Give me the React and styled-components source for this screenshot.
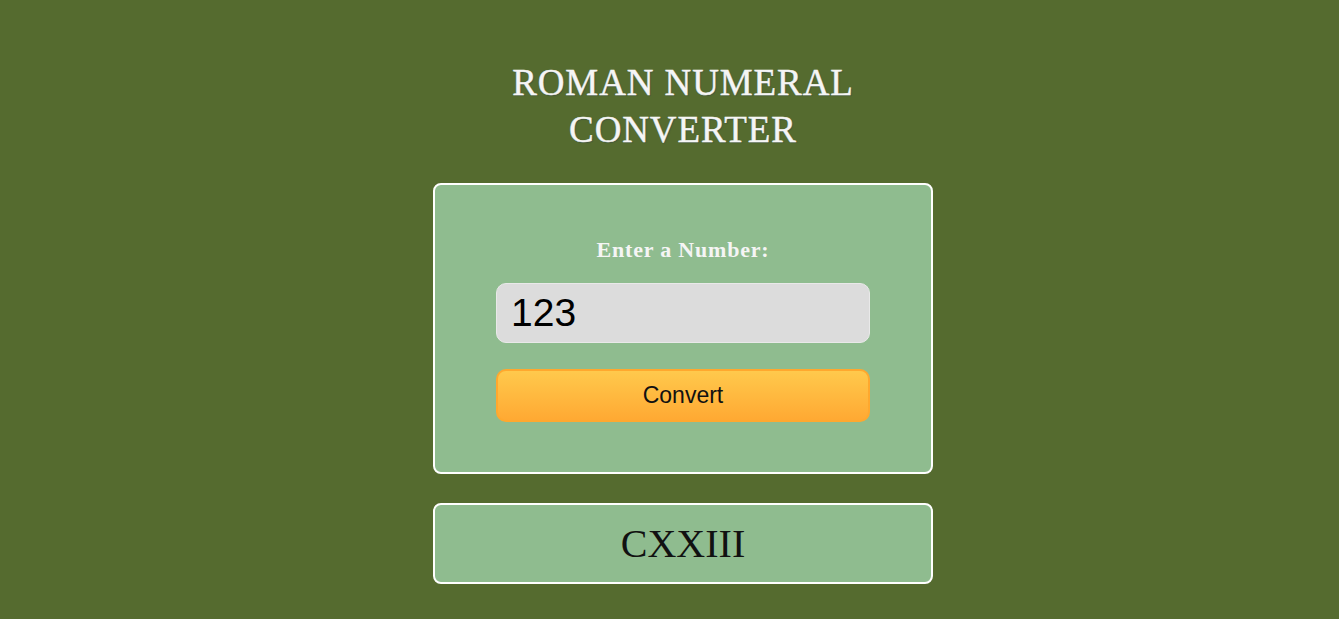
import React, { useState } from 'react'
import styled, { createGlobalStyle } from 'styled-components'

const GlobalStyle = createGlobalStyle`
body {
  margin:0;
  background:#556b2f;
  font-family:"Liberation Serif", "Times New Roman", serif;
}
`

const Page = styled.main`
display:flex;
flex-direction:column;
align-items:center;
padding:59px 0 0 27px;
min-height:100vh;
box-sizing:border-box;
`

const Title = styled.h1`
margin:0 0 30px;
color:#f5f5f5;
font-size:37px;
font-weight:normal;
line-height:47px;
text-align:center;
letter-spacing:0.9px;
text-shadow:1px 1px 1px rgba(40, 60, 80, 0.45);
-webkit-text-stroke:0.4px #f5f5f5;
`

const Card = styled.div`
width:500px;
box-sizing:border-box;
background:#8fbc8f;
border:2px solid #fff;
border-radius:8px;
display:flex;
flex-direction:column;
align-items:center;
`

const FormCard = styled(Card)`
height:291px;
padding-top:52px;
`

const ResultCard = styled(Card)`
height:81px;
margin-top:29px;
justify-content:center;
`

const Label = styled.label`
color:#f5f5f5;
font-size:22px;
font-weight:bold;
letter-spacing:0.8px;
margin-bottom:20px;
`

const Input = styled.input`
width:374px;
height:60px;
box-sizing:border-box;
background:#dcdcdc;
border:1px solid #e9e9e9;
border-radius:10px;
padding:0 14px;
font-family:"Liberation Sans", Arial, sans-serif;
font-size:39px;
color:#000;
outline:none;
`

const Button = styled.button`
width:374px;
height:53px;
margin-top:26px;
box-sizing:border-box;
background:linear-gradient(#ffc94c, #ffa933);
border:2px solid #ffa82e;
border-radius:10px;
font-family:"Liberation Sans", Arial, sans-serif;
font-size:23px;
color:#111;
`

const Result = styled.p`
margin:0;
font-size:40px;
color:#111;
`

function App() {
  const [value, setValue] = useState('123')

  return (
    <Page>
      <GlobalStyle />
      <Title>ROMAN NUMERAL<br />CONVERTER</Title>
      <FormCard>
        <Label htmlFor="number">Enter a Number:</Label>
        <Input id="number" type="number" value={value} onChange={e => setValue(e.target.value)} />
        <Button>Convert</Button>
      </FormCard>
      <ResultCard>
        <Result>CXXIII</Result>
      </ResultCard>
    </Page>
  )
}

export default App
